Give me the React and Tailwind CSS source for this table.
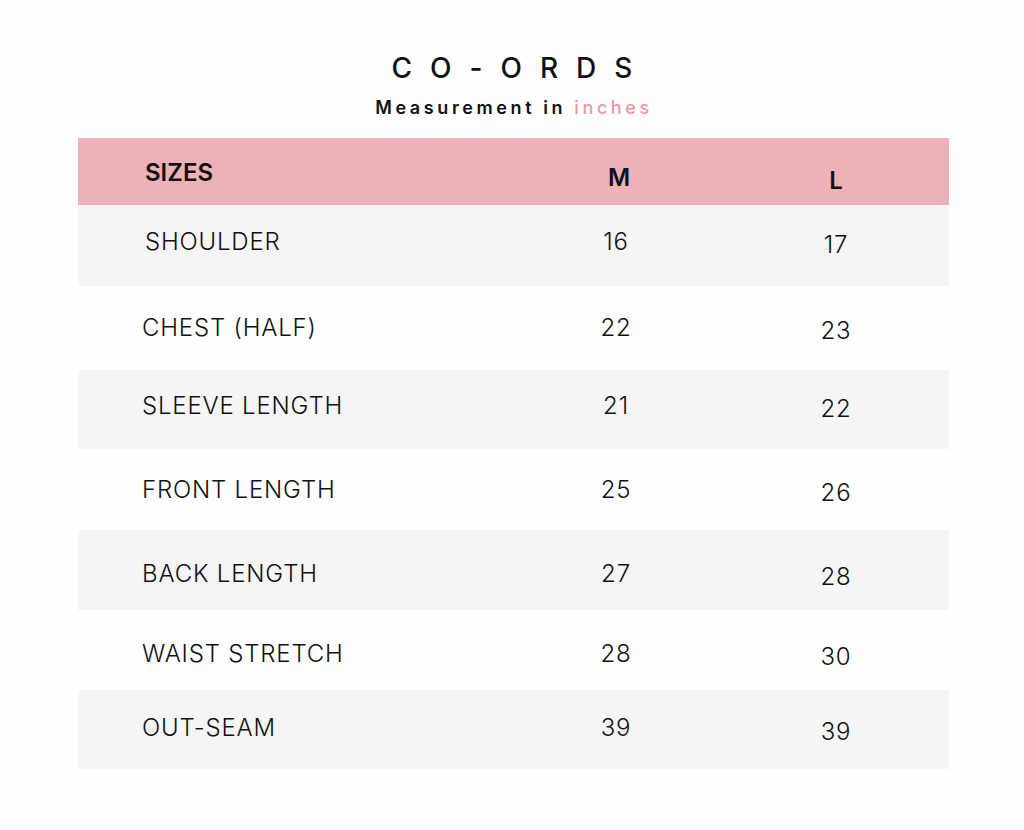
import React from "react";

const rows = [
  { label: "SHOULDER", m: "16", l: "17", bg: "bg-[#f5f5f5]", h: "h-[81px]", pt: "pt-[21px]", ptl: "pt-[24px]", pl: "pl-[67px]" },
  { label: "CHEST (HALF)", m: "22", l: "23", bg: "bg-[#fefefe]", h: "h-[84px]", pt: "pt-[26px]", ptl: "pt-[29px]", pl: "pl-[64px]" },
  { label: "SLEEVE LENGTH", m: "21", l: "22", bg: "bg-[#f5f5f5]", h: "h-[79px]", pt: "pt-[20px]", ptl: "pt-[23px]", pl: "pl-[64px]" },
  { label: "FRONT LENGTH", m: "25", l: "26", bg: "bg-[#fefefe]", h: "h-[81px]", pt: "pt-[25px]", ptl: "pt-[28px]", pl: "pl-[64px]" },
  { label: "BACK LENGTH", m: "27", l: "28", bg: "bg-[#f5f5f5]", h: "h-[80px]", pt: "pt-[28px]", ptl: "pt-[31px]", pl: "pl-[64px]" },
  { label: "WAIST STRETCH", m: "28", l: "30", bg: "bg-[#fefefe]", h: "h-[80px]", pt: "pt-[28px]", ptl: "pt-[31px]", pl: "pl-[64px]" },
  { label: "OUT-SEAM", m: "39", l: "39", bg: "bg-[#f5f5f5]", h: "h-[79px]", pt: "pt-[22px]", ptl: "pt-[26px]", pl: "pl-[64px]" },
];

export default function App() {
  return (
    <div className="w-[1024px] h-[830px] bg-[#fefefe] font-['Inter',sans-serif] text-[#111] flex flex-col items-center pt-[50px]">
      <div className="h-[36px] leading-[36px] text-[28px] font-medium tracking-[18px] pl-[18px]">CO-ORDS</div>
      <div className="mt-[10px] h-[24px] leading-[24px] text-[18px] font-semibold tracking-[3.6px] pl-[4px]">
        Measurement in <span className="text-[#e9999e] font-medium">inches</span>
      </div>
      <div className="mt-[18px] w-[871px] self-start ml-[78px] flex flex-col">
        <div className="h-[67px] bg-[#edb1b7] flex items-start text-[24px] leading-[32px] font-semibold">
          <div className="w-[498px] pl-[67px] pt-[19px]">SIZES</div>
          <div className="w-[80px] text-center pt-[24px] pl-[6px]">M</div>
          <div className="w-[80px] ml-[140px] text-center pt-[27px]">L</div>
        </div>
        {rows.map((r) => (
          <div key={r.label} className={`${r.h} ${r.bg} flex items-start text-[24px] leading-[32px] font-light tracking-[0.8px]`}>
            <div className={`w-[498px] ${r.pl} ${r.pt}`}>{r.label}</div>
            <div className={`w-[80px] text-center ${r.pt}`}>{r.m}</div>
            <div className={`w-[80px] ml-[140px] text-center ${r.ptl}`}>{r.l}</div>
          </div>
        ))}
      </div>
    </div>
  );
}
